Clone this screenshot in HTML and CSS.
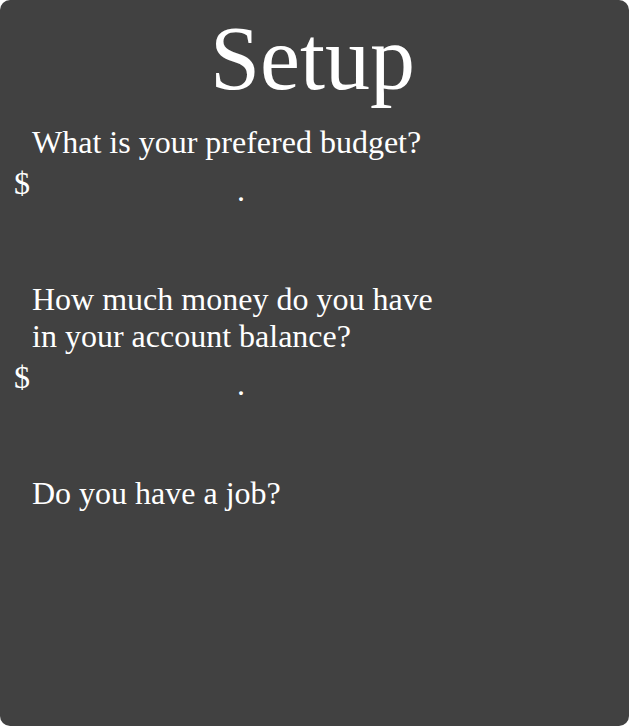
FILE: index.html
```html
<!DOCTYPE html>
<html lang="en">
<head>
<meta charset="utf-8">
<title>Setup</title>
<link rel="stylesheet" href="styles.css">
</head>
<body>
<main class="card">
  <h1 class="title">Setup</h1>
  <section class="question first">
    <label class="prompt" for="budget">What is your prefered budget?</label>
    <div class="amount">
      <span class="currency">$</span>
      <input class="whole" id="budget" type="text">
      <span class="sep">.</span>
      <input class="cents" type="text">
    </div>
  </section>
  <section class="question">
    <label class="prompt" for="balance">How much money do you have<br>in your account balance?</label>
    <div class="amount">
      <span class="currency">$</span>
      <input class="whole" id="balance" type="text">
      <span class="sep">.</span>
      <input class="cents" type="text">
    </div>
  </section>
  <section class="question">
    <p class="prompt">Do you have a job?</p>
  </section>
</main>
</body>
</html>
```

FILE: styles.css
```css
html, body {
  margin: 0;
  padding: 0;
  background: #ffffff;
}

.card {
  box-sizing: border-box;
  width: 629px;
  height: 726px;
  background: #414141;
  border-radius: 10px;
  padding: 9px 0 0 14px;
  color: #ffffff;
  font-family: "Liberation Serif", "Times New Roman", serif;
  font-size: 32px;
  line-height: 37px;
  overflow: hidden;
}

.title {
  margin: 0 0 0 -14px;
  padding-right: 4px;
  font-size: 90px;
  line-height: 100px;
  font-weight: normal;
  text-align: center;
}

.question {
  margin-top: 79px;
}

.question.first {
  margin-top: 15px;
}

.prompt {
  display: block;
  margin: 0;
  padding-left: 18px;
}

.amount {
  display: flex;
  align-items: flex-start;
  height: 37px;
  margin-top: 4px;
}

.currency {
  width: 16px;
}

.whole {
  width: 207px;
}

.cents {
  width: 120px;
}

.whole, .cents {
  box-sizing: border-box;
  height: 37px;
  padding: 0;
  margin: 0;
  border: none;
  outline: none;
  background: transparent;
  color: #ffffff;
  font: inherit;
}

.sep {
  margin-top: 7px;
  line-height: 37px;
}
```
